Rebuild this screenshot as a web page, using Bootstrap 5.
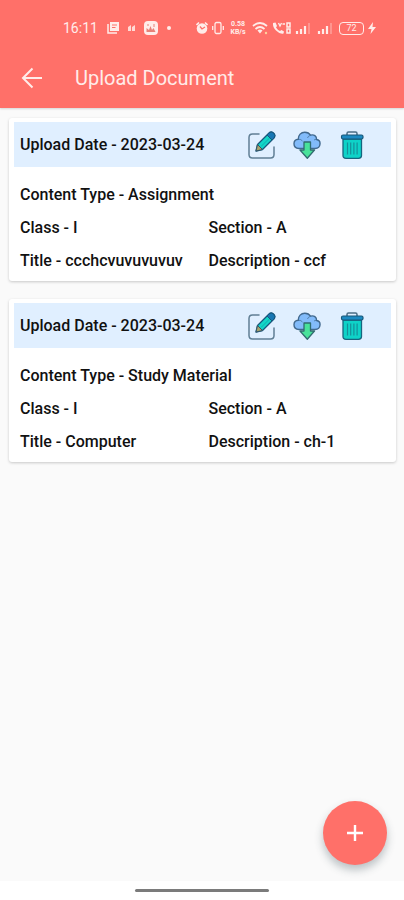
<!DOCTYPE html>
<html lang="en">
<head>
<meta charset="utf-8">
<meta name="viewport" content="width=device-width, initial-scale=1">
<title>Upload Document</title>
<link href="https://cdn.jsdelivr.net/npm/bootstrap@5.3.0/dist/css/bootstrap.min.css" rel="stylesheet">
<script defer src="https://cdn.jsdelivr.net/npm/bootstrap@5.3.0/dist/js/bootstrap.bundle.min.js"></script>
<style>
  :root { --coral: #ff7069; }
  body { font-family: Roboto, "Liberation Sans", sans-serif; background: #fafafa; color: #111; }
  svg { display: block; flex: none; }
  .app-top { background: var(--coral); color: #ffece9; box-shadow: 0 1px 2px rgba(0,0,0,.15); }
  .status-row { height: 48px; padding: 8px 28px 0 63px; font-size: 14px; line-height: 16px; }
  .status-left { gap: 9px; }
  .status-right { gap: 4px; }
  .net-speed { width: 20px; font-size: 7px; line-height: 8px; font-weight: 700; }
  .net-speed span { height: 8px; }
  .battery { width: 25px; height: 13px; border: 1px solid #ffece9; border-radius: 4px; font-size: 9px; line-height: 11px; }
  .title-row { height: 60px; padding: 0 20px; gap: 31px; }
  .title-row h1 { font-size: 20px; line-height: 24px; font-weight: 400; }
  .icon-btn { color: inherit; background: none; line-height: 1; }
  .doc-list { padding: 10px 8px 0 9px; gap: 18px; }
  .doc-card { padding: 4px 5px; border-radius: 3px; box-shadow: 0 1px 3px rgba(0,0,0,.2); font-size: 16px; line-height: 20px; font-weight: 500; }
  .doc-head { background: #e0efff; height: 45px; padding: 0 25px 0 6px; }
  .doc-head h2 { font-size: 16px; line-height: 20px; font-weight: 500; }
  .doc-tools { gap: 17px; }
  .doc-body { padding: 18px 2px 6px 6px; row-gap: 13px; }
  .fab { width: 64px; height: 64px; right: 17px; bottom: 35px; background: var(--coral); box-shadow: 0 5px 8px rgba(40,60,70,.3); }
  .nav-strip { background: #fff; height: 19px; }
  .nav-strip div { width: 134px; height: 3px; border-radius: 2px; background: #7b7b7b; }
</style>
</head>
<body class="min-vh-100 d-flex flex-column">
<svg width="0" height="0" class="position-absolute" aria-hidden="true">
  <symbol id="edit" viewBox="0 0 28 28">
    <path d="M11 3H4.500Q1 3 1 6.500V23.500Q1 27 4.500 27H22.500Q26 27 26 23.500V16" fill="none" stroke="#607f95" stroke-width="1.500" stroke-linecap="round"/>
    <path d="M8 20L9.500 13.500L21 2Q23 0 25.500 2Q28 4.500 26 7L14.500 18.500Z" fill="#12d6c8" stroke="#17577d" stroke-width="1.300" stroke-linejoin="round"/>
    <path d="M19 4L21 2Q23 0 25.500 2Q28 4.500 26 7L24 9Z" fill="#1877b4" stroke="#17577d"/>
    <path d="M8 20L9.500 13.500L14.500 18.500Z" fill="#a7a36c" stroke="#35566a" stroke-linejoin="round"/>
    <path d="M13 15.500L21.500 7" stroke="#0fb0ad"/>
  </symbol>
  <symbol id="cloud" viewBox="0 0 28 28">
    <path d="M6 17.500C2.500 17.500 1 15.300 1 12.800C1 10 3 8.300 5.300 8.200C5.200 4 8 1.200 11.800 1.200C14.500 1.200 16.400 2.300 17.500 4.200C21 3.100 23.600 5 23.600 8.500C26 9 27.200 10.800 27 13C26.800 16 25 17.500 22 17.500Z" fill="#82bbfa" stroke="#41698f" stroke-width="1.400"/>
    <path d="M5.300 8.200Q8 8 9.500 10M17.500 4.200Q15 5 14.500 7M23.600 8.500Q22 8.300 21 9" fill="none" stroke="#41698f" stroke-opacity=".7"/>
    <path d="M11 11H17.500V19H21.500L14.300 27.200L7 19H11Z" fill="#48e29a" stroke="#316c70" stroke-width="1.300" stroke-linejoin="round"/>
  </symbol>
  <symbol id="trash" viewBox="0 0 28 28">
    <path d="M9 4V2.500Q9 1 10.500 1H17.500Q19 1 19 2.500V4" fill="none" stroke="#4b6d85" stroke-width="1.500"/>
    <path d="M5 8H23.500V24.500Q23.500 27.300 20.500 27.300H8Q5 27.300 5 24.500Z" fill="#0ed3c8" stroke="#17657e" stroke-width="1.300"/>
    <rect x="3.500" y="4" width="21.500" height="4" rx="1.500" fill="#1c8ac2" stroke="#175779" stroke-width="1.200"/>
    <path d="M9.500 11.500V23.500M12.700 11.500V23.500M15.900 11.500V23.500M19.100 11.500V23.500" stroke="#14909a" stroke-width="1.200"/>
  </symbol>
  <symbol id="signal" viewBox="0 0 18 14">
    <path d="M2 10V13M6 8V13M10 5V13" stroke="#ffece9" stroke-width="2.200"/>
    <path d="M14 2V13" stroke="#ffece9" stroke-opacity=".3" stroke-width="2"/>
  </symbol>
</svg>

<header class="app-top">
  <div class="status-row d-flex align-items-center">
    <div class="status-left d-flex align-items-center">
      <span>16:11</span>
      <svg width="12" height="12" viewBox="0 0 12 12"><path d="M3 0H12V9H3Z" fill="#ffece9"/><path d="M1 2V11H10" fill="none" stroke="#ffece9" stroke-width="1.500"/><path d="M5 3H10M5 5.500H8.500" stroke="#ff7069"/></svg>
      <svg width="7" height="6" viewBox="0 0 7 6"><path d="M0 2L3 0V6H0ZM4 2L7 0V6H4Z" fill="#ffece9" fill-opacity=".85"/></svg>
      <svg width="14" height="14" viewBox="0 0 14 14"><rect width="14" height="14" rx="4" fill="#ffece9"/><path d="M2.500 11V7L5 9L6.500 5L8 9L9.500 7L11.500 11Z" fill="#e98078"/><path d="M4 3V5M10 3V6" stroke="#e98078"/></svg>
      <svg width="4" height="4" viewBox="0 0 4 4"><circle cx="2" cy="2" r="2" fill="#ffece9"/></svg>
    </div>
    <div class="status-right d-flex align-items-center ms-auto">
      <svg width="12" height="14" viewBox="0 0 12 14"><circle cx="6" cy="7.500" r="5.300" fill="#ffece9"/><path d="M.5 4L3 1.500M11.500 4L9 1.500" stroke="#ffece9" stroke-width="1.600"/><path d="M4 5.500L6 8L9 6" fill="none" stroke="#ff7069" stroke-width="1.300"/></svg>
      <svg width="12" height="14" viewBox="0 0 12 14"><rect x="3" y="1.500" width="6" height="11" rx="1.500" fill="none" stroke="#ffece9" stroke-width="1.300"/><path d="M.7 5V9M11.300 5V9" stroke="#ffece9" stroke-width="1.300"/></svg>
      <div class="net-speed d-flex flex-column align-items-center"><span>0.58</span><span>KB/s</span></div>
      <svg width="16" height="14" viewBox="0 0 16 14"><path d="M1 5Q8-1 15 5M3.500 8Q8 4 12.500 8" fill="none" stroke="#ffece9" stroke-width="1.800"/><path d="M5.500 9.500Q8 7.500 10.500 9.500L8 12.500Z" fill="#ffece9"/><circle cx="14" cy="12" r="1.200" fill="#ffcf9c"/></svg>
      <svg width="19" height="14" viewBox="0 0 19 14"><path d="M1 2L3.500 1.500L5 5L4 6.500Q5.500 9 8 10L9.500 9L12 10.500L11.500 12.500Q8 13.500 4 9.500Q.5 6 1 2Z" fill="#ffece9"/><path d="M6.500 2L8 5L9.500 2M10.500 3H13" fill="none" stroke="#ffece9" stroke-width="1.300"/><path d="M15 2H18V6H15ZM15 8H18V12H15Z" fill="none" stroke="#ffece9" stroke-width="1.500"/></svg>
      <svg width="18" height="14"><use href="#signal"/></svg>
      <svg width="18" height="14"><use href="#signal"/></svg>
      <span class="battery text-center">72</span>
      <svg width="8" height="12" viewBox="0 0 8 12"><path d="M5 0L0 7H3.500L2.500 12L8 5H4.500Z" fill="#ffece9"/></svg>
    </div>
  </div>
  <div class="title-row d-flex align-items-center">
    <button type="button" class="icon-btn border-0 p-0" aria-label="Back">
      <svg width="24" height="24" viewBox="0 0 24 24" fill="none" stroke="#ffece9" stroke-width="2"><path d="M22 12H3M12.500 2.500L3 12L12.500 21.500"/></svg>
    </button>
    <h1 class="m-0">Upload Document</h1>
  </div>
</header>

<main class="doc-list d-flex flex-column flex-grow-1">
  <article class="doc-card bg-white">
    <div class="doc-head d-flex align-items-center justify-content-between">
      <h2 class="m-0">Upload Date - 2023-03-24</h2>
      <div class="doc-tools d-flex">
        <button type="button" class="icon-btn border-0 p-0" aria-label="Edit"><svg width="28" height="28"><use href="#edit"/></svg></button>
        <button type="button" class="icon-btn border-0 p-0" aria-label="Download"><svg width="28" height="28"><use href="#cloud"/></svg></button>
        <button type="button" class="icon-btn border-0 p-0" aria-label="Delete"><svg width="28" height="28"><use href="#trash"/></svg></button>
      </div>
    </div>
    <div class="doc-body row gx-0">
      <div class="col-12">Content Type - Assignment</div>
      <div class="col-6">Class - I</div>
      <div class="col-6 ps-1">Section - A</div>
      <div class="col-6">Title - ccchcvuvuvuvuv</div>
      <div class="col-6 ps-1">Description - ccf</div>
    </div>
  </article>
  <article class="doc-card bg-white">
    <div class="doc-head d-flex align-items-center justify-content-between">
      <h2 class="m-0">Upload Date - 2023-03-24</h2>
      <div class="doc-tools d-flex">
        <button type="button" class="icon-btn border-0 p-0" aria-label="Edit"><svg width="28" height="28"><use href="#edit"/></svg></button>
        <button type="button" class="icon-btn border-0 p-0" aria-label="Download"><svg width="28" height="28"><use href="#cloud"/></svg></button>
        <button type="button" class="icon-btn border-0 p-0" aria-label="Delete"><svg width="28" height="28"><use href="#trash"/></svg></button>
      </div>
    </div>
    <div class="doc-body row gx-0">
      <div class="col-12">Content Type - Study Material</div>
      <div class="col-6">Class - I</div>
      <div class="col-6 ps-1">Section - A</div>
      <div class="col-6">Title - Computer</div>
      <div class="col-6 ps-1">Description - ch-1</div>
    </div>
  </article>
</main>

<button type="button" class="fab position-fixed border-0 rounded-circle d-flex align-items-center justify-content-center p-0" aria-label="Add document">
  <svg width="16" height="16" viewBox="0 0 16 16"><path d="M8 0V16M0 8H16" stroke="#fff" stroke-width="2.400"/></svg>
</button>
<footer class="nav-strip d-flex align-items-center justify-content-center"><div></div></footer>
</body>
</html>
